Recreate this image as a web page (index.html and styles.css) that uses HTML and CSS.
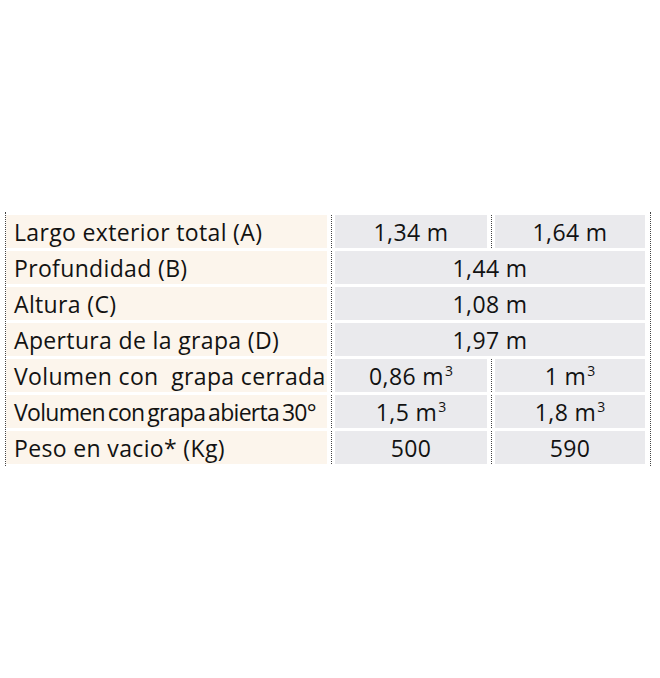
FILE: index.html
```html
<!DOCTYPE html>
<html lang="es">
<head>
<meta charset="utf-8">
<link rel="stylesheet" href="styles.css">
</head>
<body>
<div class="page">
  <div class="table">
    <div class="row">
      <div class="label">Largo exterior total (A)</div>
      <div class="div"></div>
      <div class="val">1,34 m</div>
      <div class="div"></div>
      <div class="val">1,64 m</div>
    </div>
    <div class="row">
      <div class="label">Profundidad (B)</div>
      <div class="div"></div>
      <div class="val span">1,44 m</div>
    </div>
    <div class="row">
      <div class="label">Altura (C)</div>
      <div class="div"></div>
      <div class="val span">1,08 m</div>
    </div>
    <div class="row">
      <div class="label">Apertura de la grapa (D)</div>
      <div class="div"></div>
      <div class="val span">1,97 m</div>
    </div>
    <div class="row">
      <div class="label">Volumen con&nbsp; grapa cerrada</div>
      <div class="div"></div>
      <div class="val">0,86 m<sup>3</sup></div>
      <div class="div"></div>
      <div class="val">1 m<sup>3</sup></div>
    </div>
    <div class="row">
      <div class="label tight">Volumen con grapa abierta 30°</div>
      <div class="div"></div>
      <div class="val">1,5 m<sup>3</sup></div>
      <div class="div"></div>
      <div class="val">1,8 m<sup>3</sup></div>
    </div>
    <div class="row">
      <div class="label">Peso en vacio* (Kg)</div>
      <div class="div"></div>
      <div class="val">500</div>
      <div class="div"></div>
      <div class="val">590</div>
    </div>
  </div>
</div>
</body>
</html>
```
FILE: styles.css
```css
html, body {
  margin: 0;
  padding: 0;
  background: #ffffff;
}
.page {
  width: 660px;
  height: 678px;
  padding-top: 212px;
  box-sizing: border-box;
}
.table {
  margin-left: 5px;
  width: 646px;
  box-sizing: border-box;
  border-left: 1px dotted #444;
  border-right: 1px dotted #444;
  padding: 3px 0 3px 0;
  display: flex;
  flex-direction: column;
  gap: 4px;
  font-family: "Open Sans", "Noto Sans", sans-serif;
  color: #121212;
  font-size: 23px;
  letter-spacing: 0.35px;
}
.row {
  display: grid;
  grid-template-columns: 321px 8px 152px 8px 150px;
  height: 32px;
  line-height: 32px;
}
.label {
  background: #fcf5ec;
  padding-left: 8px;
  padding-top: 1px;
  white-space: nowrap;
  overflow: visible;
}
.label.tight {
  letter-spacing: -0.7px;
  word-spacing: -2.5px;
}
.val {
  background: #eaeaed;
  text-align: center;
  padding-top: 1px;
  white-space: nowrap;
}
.val.span {
  grid-column: 3 / 6;
}
.div {
  justify-self: center;
  width: 0;
  border-left: 1px dotted #444;
}
sup {
  font-size: 14px;
  line-height: 0;
  vertical-align: baseline;
  position: relative;
  top: -9px;
  margin-left: 1px;
  letter-spacing: 0;
}
```
